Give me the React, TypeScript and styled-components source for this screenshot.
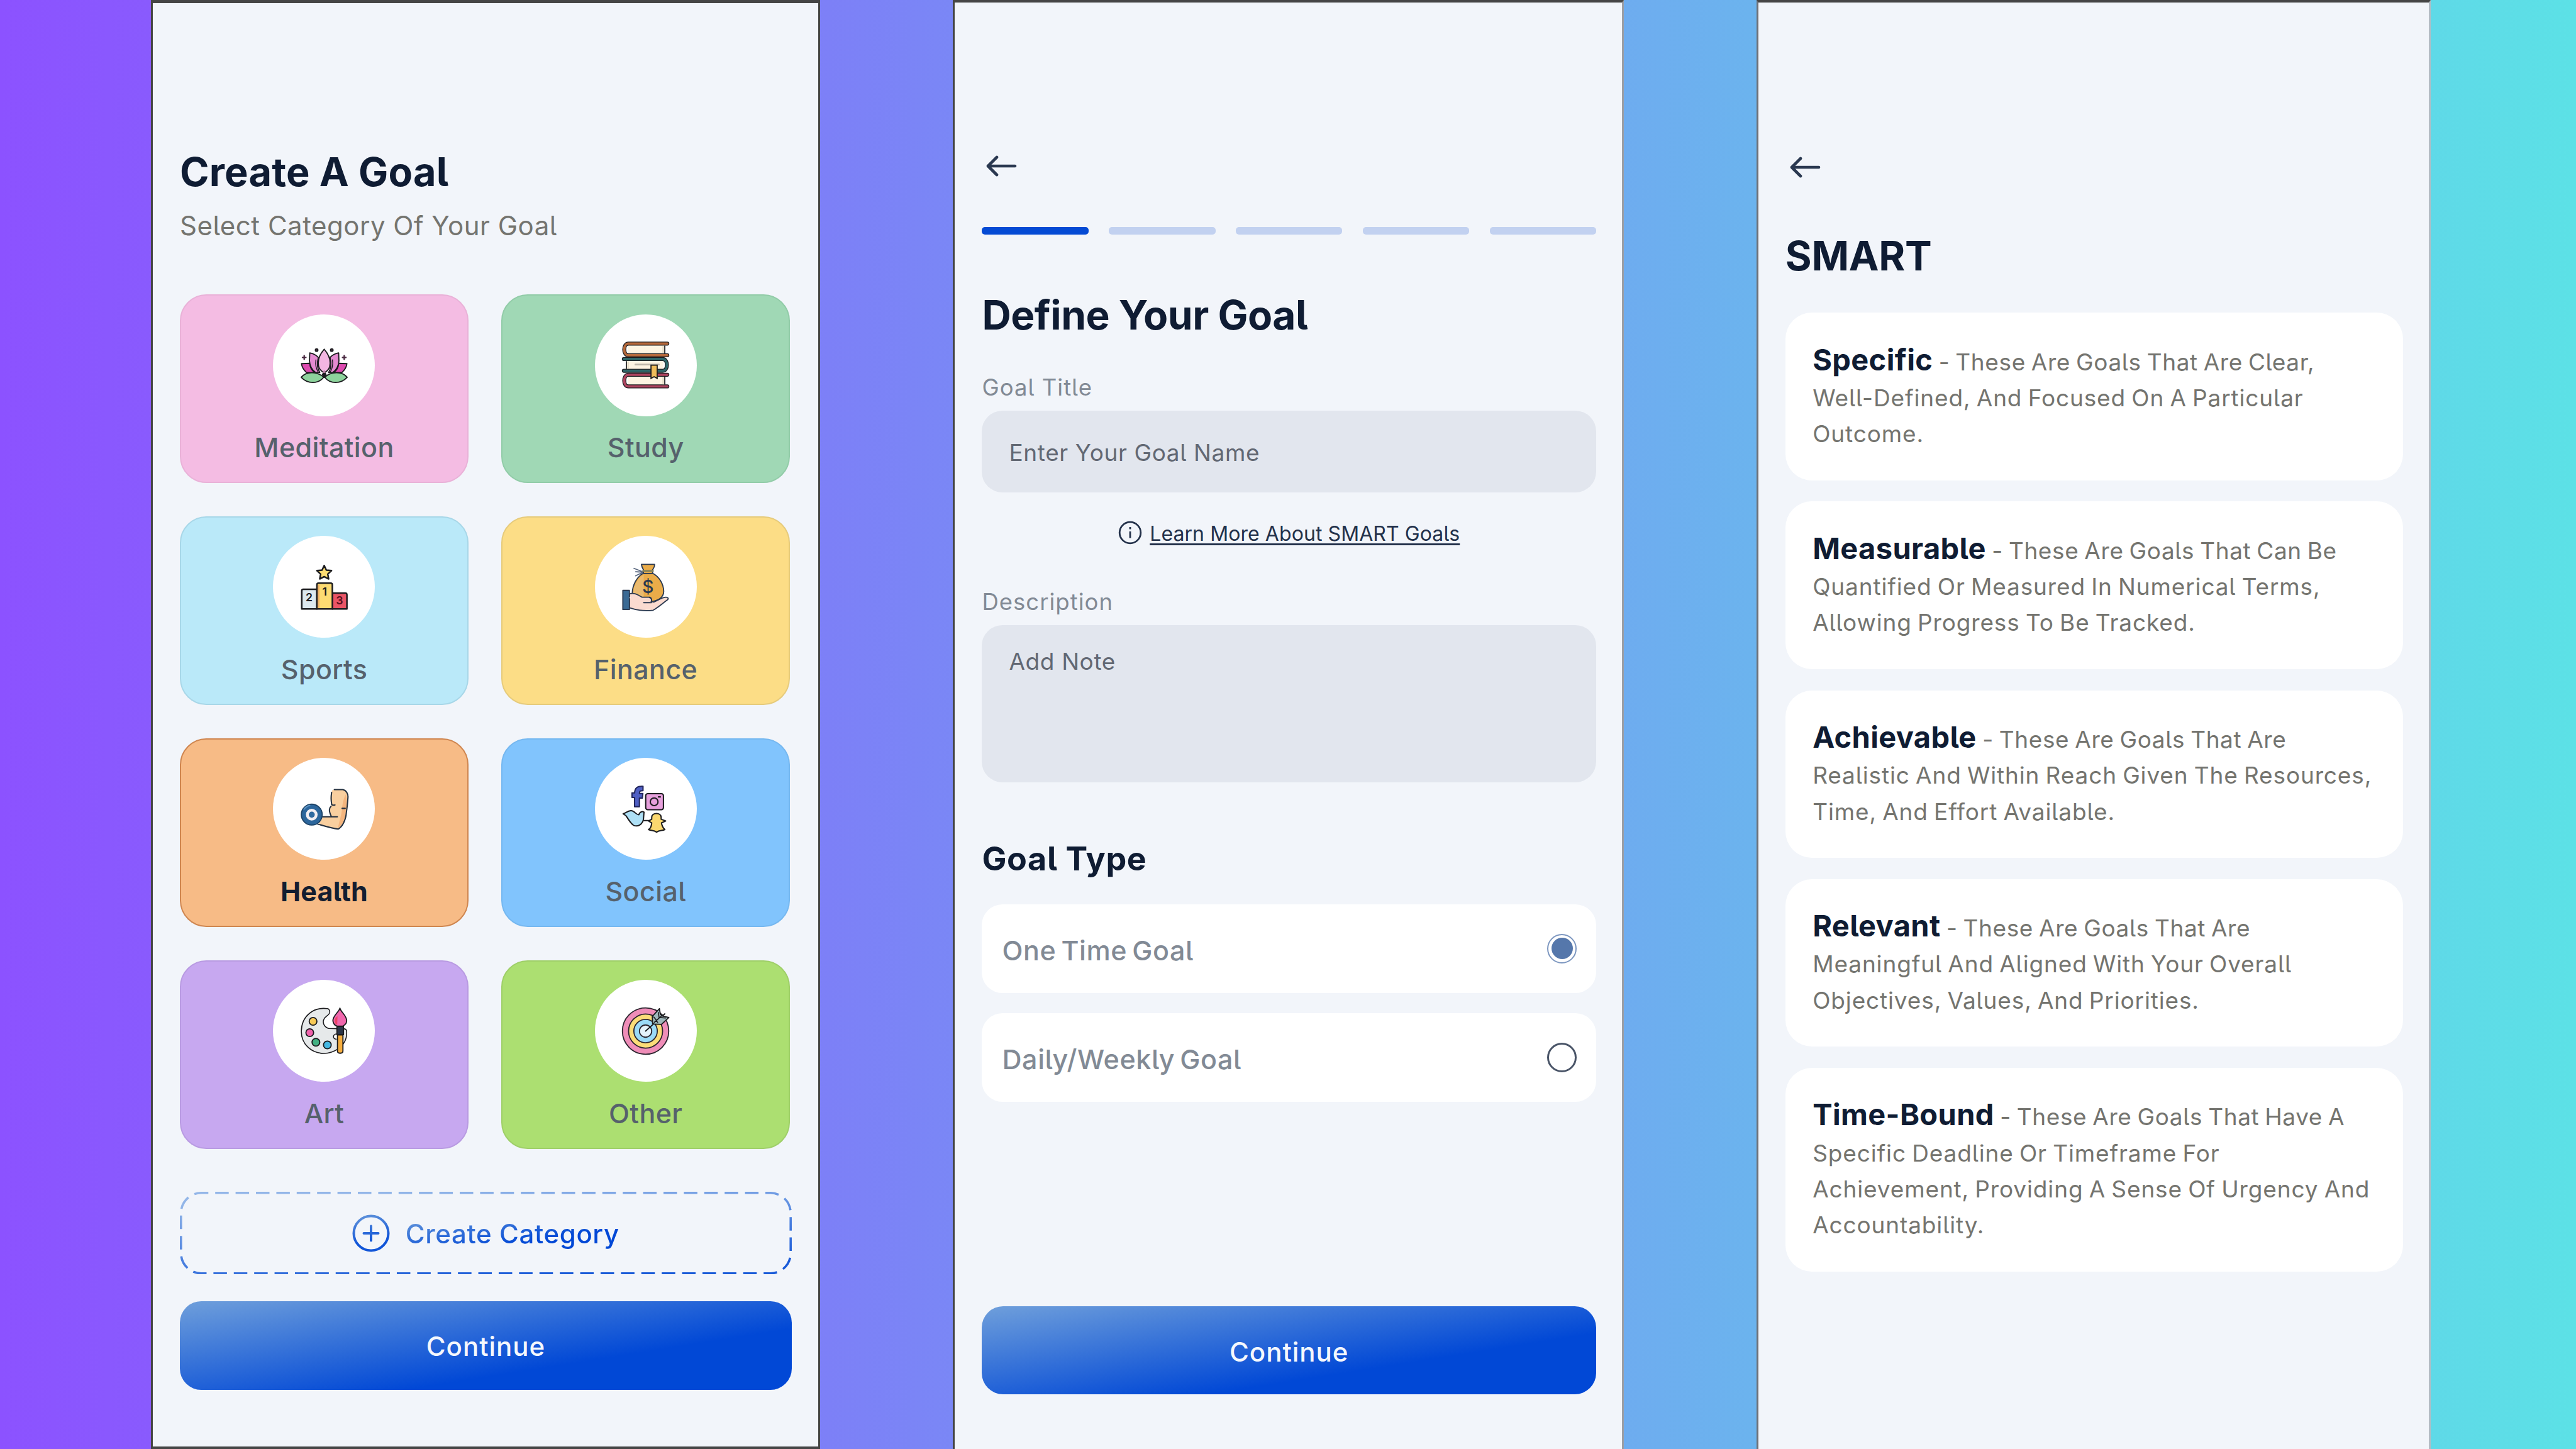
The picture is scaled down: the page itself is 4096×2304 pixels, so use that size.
import React from "react";
import styled, { createGlobalStyle, css } from "styled-components";

const GlobalStyle = createGlobalStyle`
  * { box-sizing: border-box; }
  html, body { margin: 0; padding: 0; }
  body {
    width: 4096px;
    height: 2304px;
    overflow: hidden;
    font-family: Inter, "Liberation Sans", sans-serif;
    font-feature-settings: "cv05";
    color: #0f1c33;
  }
  h1, h2, p { margin: 0; }
  button { font: inherit; font-feature-settings: inherit; }
`;

const primaryGradient = "linear-gradient(171deg, #6f9fdb 0%, #0148d6 67%)";

const Stage = styled.main`
  display: flex;
  width: 4096px;
  height: 2304px;
  padding-left: 240.3px;
  gap: 210.8px;
  background: linear-gradient(90deg, #8c52ff 0%, #5ce1e6 100%);
`;

const Phone = styled.section<{ $width: number; $closed?: boolean; $soft?: boolean }>`
  display: flex;
  flex-direction: column;
  flex: none;
  width: ${(p) => p.$width}px;
  height: 2304px;
  background: #f2f5fa;
  border-style: solid;
  border-color: #454545 ${(p) => (p.$closed ? "#454545" : p.$soft ? "#b4bcc4" : "#9a9ea6")} #454545
    ${(p) => (p.$soft ? "#6d7178" : "#454545")};
  border-width: ${(p) => (p.$closed ? "5px 3px 4px 3px" : "4px 3px 0 3px")};
`;

const CategoryScreen = styled(Phone)`
  padding: 230px 45px 0 42.7px;
`;
const DefineScreen = styled(Phone)`
  padding: 236px 41px 0 43.8px;
`;
const SmartScreen = styled(Phone)`
  padding: 238px 41px 0 43px;
`;

const Title = styled.h1<{ $gap?: number; $size?: number; $track?: number }>`
  margin-top: ${(p) => p.$gap ?? 0}px;
  font-size: ${(p) => p.$size ?? 64}px;
  font-weight: 680;
  line-height: 76px;
  letter-spacing: ${(p) => p.$track ?? 0}px;
  white-space: nowrap;
`;

const Subtitle = styled.p`
  margin-top: 23.4px;
  font-size: 42px;
  line-height: 50px;
  letter-spacing: 0.5px;
  color: #74746f;
`;

const CategoryGrid = styled.div`
  display: grid;
  grid-template-columns: 459px 459px;
  grid-auto-rows: 300px;
  gap: 52.9px 52.2px;
  margin-top: 83.7px;
`;

const CategoryCard = styled.button<{ $fill: string; $edge: string; $active?: boolean }>`
  display: flex;
  flex-direction: column;
  align-items: center;
  padding: 29.5px 0 0;
  border: 2px solid ${(p) => p.$edge};
  border-radius: 42px;
  background: ${(p) => p.$fill};
  font-size: 43px;
  line-height: 50px;
  ${(p) =>
    p.$active
      ? css`font-weight: 660; color: #131d30; letter-spacing: 0.2px;`
      : css`font-weight: 500; color: #56616c; letter-spacing: 0.4px;`}
`;

const IconDisc = styled.span`
  display: grid;
  place-items: center;
  width: 162px;
  height: 162px;
  margin-bottom: 24.5px;
  border-radius: 50%;
  background: #fff;
`;

const Glyph = styled.svg`
  width: 75px;
  height: 75px;
  overflow: visible;
`;

const CreateCategory = styled.button`
  position: relative;
  display: flex;
  align-items: center;
  justify-content: center;
  gap: 24.5px;
  width: 973px;
  height: 131.5px;
  margin-top: 68.2px;
  padding: 0;
  border: 0;
  background: none;
`;

const DashedOutline = styled.svg`
  position: absolute;
  inset: 0;
  width: 100%;
  height: 100%;
`;

const GradientLabel = styled.span`
  padding-top: 3px;
  font-size: 42px;
  font-weight: 530;
  line-height: 54px;
  letter-spacing: 0.62px;
  color: transparent;
  background: linear-gradient(171deg, #6f9fdb 0%, #0148d6 67%);
  background-clip: text;
`;

const PlusIcon = styled.svg`
  width: 60px;
  height: 60px;
`;

const PrimaryButton = styled.button<{ $gap: number; $drop: number }>`
  flex: none;
  width: ${(p) => (p.$gap > 100 ? "100%" : "973px")};
  height: 140.6px;
  margin-top: ${(p) => p.$gap}px;
  padding: ${(p) => p.$drop}px 0 0;
  border: 0;
  border-radius: 34px;
  background: ${primaryGradient};
  color: #f5f8fd;
  font-size: 42px;
  font-weight: 500;
  letter-spacing: 1px;
`;

const BackArrow = styled.svg`
  flex: none;
  width: 49px;
  height: 48px;
  margin-left: 7px;
`;

const Steps = styled.div`
  display: grid;
  grid-template-columns: repeat(5, 1fr);
  gap: 32.4px;
  margin-top: 73.4px;
`;

const Step = styled.span<{ $on?: boolean }>`
  height: 11.3px;
  border-radius: 5px;
  background: ${(p) => (p.$on ? "#044ad4" : "#c2d1f0")};
`;

const FieldLabel = styled.label<{ $gap: number }>`
  margin-top: ${(p) => p.$gap}px;
  font-size: 36.5px;
  line-height: 44px;
  letter-spacing: 1px;
  color: #828a95;
`;

const Field = styled.div<{ $height: number; $pad: number }>`
  height: ${(p) => p.$height}px;
  margin-top: 14.6px;
  padding: ${(p) => p.$pad}px 43px 0;
  border-radius: 33px;
  background: #e2e6ee;
  font-size: 37px;
  line-height: 44px;
  letter-spacing: 0.6px;
  color: #626873;
`;

const LearnMore = styled.a`
  display: flex;
  align-items: center;
  justify-content: center;
  gap: 12px;
  height: 44px;
  margin-top: 43.8px;
  font-size: 32px;
  line-height: 44px;
  color: #23314a;
`;

const LearnText = styled.span`
  letter-spacing: 0.08px;
  text-decoration: underline;
  text-decoration-thickness: 3px;
  text-underline-offset: 4px;
  text-decoration-skip-ink: none;
`;

const InfoIcon = styled.svg`
  width: 38px;
  height: 38px;
  margin-top: -4px;
`;

const SectionTitle = styled.h2`
  margin-top: 90.5px;
  font-size: 52px;
  font-weight: 660;
  line-height: 64px;
  letter-spacing: 0.6px;
`;

const Options = styled.div`
  display: grid;
  gap: 32.2px;
  margin-top: 39.6px;
`;

const Option = styled.div`
  display: flex;
  align-items: center;
  justify-content: space-between;
  height: 141px;
  padding: 0 30.5px 0 32px;
  border-radius: 33px;
  background: #fff;
  font-size: 43px;
  font-weight: 500;
  letter-spacing: 0.6px;
  word-spacing: -4px;
  color: #828a95;
`;

const OptionText = styled.span`
  padding-top: 5px;
`;

const Radio = styled.span<{ $on?: boolean }>`
  display: grid;
  place-items: center;
  width: 47px;
  height: 47px;
  border: ${(p) => (p.$on ? "2.5px solid #7d97c0" : "3px solid #4a5568")};
  border-radius: 50%;
  &::after {
    content: "";
    width: 34px;
    height: 34px;
    border-radius: 50%;
    background: ${(p) => (p.$on ? "#5577ab" : "transparent")};
  }
`;

const SmartList = styled.div`
  display: grid;
  gap: 33.6px;
  margin-top: 52.4px;
`;

const SmartCard = styled.p`
  padding: 49.6px 34px 45.4px 43.4px;
  border-radius: 42px;
  background: #fff;
  font-size: 37px;
  line-height: 57.2px;
  letter-spacing: 0.86px;
  word-spacing: -2px;
  color: #74746f;
`;

const Line = styled.span`
  display: flex;
  align-items: baseline;
  height: 57.2px;
  white-space: nowrap;
`;

const Term = styled.strong`
  margin-right: 9.5px;
  font-size: 47px;
  font-weight: 660;
  line-height: 47px;
  letter-spacing: 0.35px;
  color: #0f1c33;
`;

const Lead = styled.span`
  letter-spacing: 0.6px;
`;

const ink = "#1c1c1f";
const outline = { stroke: ink, strokeWidth: 8, strokeLinejoin: "round" as const, strokeLinecap: "round" as const };

const LotusHalf = () => (
  <g {...outline}>
    <path d="M6 155 L64 153 C66 185 80 205 100 218 L40 216 C22 200 9 180 6 155Z" fill="#dd4bb0" />
    <path d="M64 80 L62 135 C64 172 82 200 105 217 L134 217 C118 190 114 150 124 112 C108 94 86 84 64 80Z" fill="#e48ad0" />
    <path d="M107 128 C102 165 108 190 122 212" fill="none" strokeWidth={6} />
    <path d="M4 250 C40 208 115 208 162 250 C125 298 50 300 4 250Z" fill="#8dd39c" />
    <path d="M25 99 V125 M13 112 H37" strokeWidth={10} stroke="#4a2a42" />
    <circle cx="112" cy="60" r="9" fill="#4a2a42" />
  </g>
);

const Lotus = () => (
  <Glyph viewBox="0 0 330 330">
    <LotusHalf />
    <g transform="translate(330 0) scale(-1 1)"><LotusHalf /></g>
    <path {...outline} d="M165 54 C190 82 208 120 206 155 C206 188 190 207 165 218 C140 207 124 188 124 155 C122 120 140 82 165 54Z" fill="#f3b6e2" />
    <path d="M165 202 L182 232 L165 256 L148 232Z" fill={ink} />
    <circle cx="165" cy="212" r="9" fill="#b57ba2" />
  </Glyph>
);

const Book = ({ y, color, flip }: { y: number; color: string; flip?: boolean }) => (
  <g transform={`translate(${flip ? 335 : 0} ${y}) ${flip ? "scale(-1 1)" : ""}`} fill="none" strokeLinecap="round">
    <path d="M42 16 H302 V98 H42Z" fill="#fdf4e2" />
    <path d="M322 15 H46 C6 15 6 98 46 98 H322" stroke={ink} strokeWidth={28} />
    <path d="M322 15 H46 C6 15 6 98 46 98 H322" stroke={color} strokeWidth={17} />
    <path d="M304 32 V82" stroke={ink} strokeWidth={8} />
    <path d="M292 34 V80" stroke="#d8cfba" strokeWidth={8} />
  </g>
);

const Books = () => (
  <Glyph viewBox="0 0 335 335">
    <Book y={0} color="#b5683a" />
    <Book y={221} color="#b04560" />
    <Book y={110} color="#2d6668" flip />
    <path d="M95 164 H262" stroke="#bcb6aa" strokeWidth={12} strokeLinecap="round" />
    <path d="M206 168 H250 V262 L228 250 L206 262Z" fill="#f0bd5a" stroke={ink} strokeWidth={8} />
  </Glyph>
);

const Digit = styled.text`
  font-size: 78px;
  font-weight: 600;
  letter-spacing: 0;
  text-anchor: middle;
`;

const Podium = () => (
  <Glyph viewBox="0 0 330 330">
    <g {...outline} strokeWidth={11}>
      <path d="M8 318 V190 Q8 180 18 180 H114 V318Z" fill="#dde9ef" />
      <path d="M222 318 V207 H312 Q324 207 324 219 V318Z" fill="#ea5566" />
      <path d="M114 318 V148 Q114 137 125 137 H211 Q222 137 222 148 V318Z" fill="#fddc72" />
      <path d="M165 14 L180 46 L216 50 L190 74 L196 108 L165 92 L134 108 L140 74 L114 50 L150 46Z" fill="#fddc72" />
    </g>
    <path d="M126 150 V310" stroke="#f0b267" strokeWidth={12} />
    <Digit x="60" y="264" fill={ink}>2</Digit>
    <Digit x="168" y="226" fill={ink}>1</Digit>
    <Digit x="272" y="284" fill="#5a1020">3</Digit>
  </Glyph>
);

const MoneyBag = () => (
  <Glyph viewBox="0 0 330 330">
    <g stroke="#2c3a50" strokeWidth={8} strokeLinejoin="round" strokeLinecap="round">
      <path d="M150 60 L84 34 M146 62 L96 86 M96 58 L140 60" fill="none" stroke="#5a6880" />
      <path d="M150 68 C105 90 74 150 72 205 C76 250 130 268 180 268 C255 268 292 235 292 195 C290 140 258 90 214 68Z" fill="#eaac49" />
      <path d="M136 6 H228 C230 24 220 34 214 44 V70 H150 V44 C144 34 138 24 136 6Z" fill="#eaac49" />
      <path d="M148 52 H216" stroke="#8a8458" strokeWidth={14} />
    </g>
    <path d="M78 205 C82 150 112 104 152 78 V256 C110 250 82 236 78 205Z" fill="#eabb70" />
    <text x="182" y="206" fontSize="124" fontWeight="500" textAnchor="middle" fill="#2c3a50" letterSpacing="0">$</text>
    <g stroke="#2c3a50" strokeWidth={8} strokeLinejoin="round" strokeLinecap="round">
      <path d="M52 213 C85 202 112 220 140 236 H192 C208 238 210 258 204 266 L222 270 C255 255 280 238 304 236 C322 234 328 246 318 254 C285 278 255 305 218 327 C170 332 110 330 52 310Z" fill="#fadbd0" />
      <path d="M152 274 H206 C212 256 204 240 192 238" fill="none" />
      <path d="M6 188 H52 V322 H6Z" fill="#3b6a94" />
    </g>
    <path d="M52 240 H60" stroke="#fff" strokeWidth={6} />
  </Glyph>
);

const Arm = () => (
  <Glyph viewBox="0 0 330 330">
    <path d="M217 44 C220 32 226 30 236 29 H300 C322 36 332 60 330 85 C328 120 326 150 320 190 C318 240 296 285 262 305 C220 302 170 285 127 270 L154 219 H216 C200 190 196 160 217 134 C206 110 208 70 217 44Z" fill="#f9cf9f" />
    <path d="M318 60 C328 120 316 190 312 215 C300 260 282 285 262 296 C270 250 285 215 290 160 C294 120 300 90 318 60Z" fill="#f4b57e" />
    <g fill="none" stroke="#24303f" strokeWidth={9} strokeLinecap="round" strokeLinejoin="round">
      <path d="M236 29 H296 C320 34 334 60 331 85 C329 120 326 150 320 190 C316 245 290 290 262 305 C220 300 170 285 120 270" />
      <path d="M217 48 C212 80 212 100 217 128 M217 134 C226 140 234 138 240 136 M212 146 C196 160 202 190 215 216 M154 219 H257 M290 160 H312" />
    </g>
    <circle cx="78" cy="204" r="73" fill="#2c669c" stroke="#1e4468" strokeWidth={8} />
    <circle cx="78" cy="204" r="31" fill="none" stroke="#f2eef2" strokeWidth={20} />
    <circle cx="78" cy="204" r="16" fill="#2f6aa0" />
    <path d="M24 166 A66 66 0 0 1 64 140" fill="none" stroke="#5c94c4" strokeWidth={9} strokeLinecap="round" />
  </Glyph>
);

const SocialMarks = () => (
  <Glyph viewBox="0 0 330 330">
    <g {...outline} strokeWidth={9}>
      <path d="M147 6 C105 2 90 20 88 52 H70 V84 H88 V148 H122 V88 H142 L146 56 H122 C122 38 128 36 147 36Z" fill="#4f5fc4" stroke="#22265c" />
      <rect x="166" y="57" width="124" height="112" rx="14" fill="#e6a0dc" />
      <circle cx="225" cy="114" r="27" fill="none" />
      <path d="M255 80 H268" strokeWidth={10} />
      <path d="M8 198 C28 192 40 178 62 176 C88 174 96 206 118 204 C124 186 140 178 154 186 L150 236 C144 272 112 290 84 280 C62 270 44 232 26 210Z" fill="#aee0f6" />
      <path d="M152 245 H190" />
      <path d="M208 224 C206 186 276 186 274 224 V236 L306 248 L276 262 C280 284 290 300 300 308 C282 318 262 312 242 326 C222 312 204 318 186 308 C200 300 206 284 208 262 L186 248 L208 236Z" fill="#fbd86f" />
    </g>
  </Glyph>
);

const Palette = () => (
  <Glyph viewBox="0 0 330 330">
    <path {...outline} strokeWidth={7} d="M188 8 C90 -6 6 60 5 165 C4 260 80 322 165 321 C210 321 240 304 262 290 C300 262 326 220 322 166 C320 152 312 148 300 149 L195 146 C165 136 152 108 162 84 C172 58 206 54 204 30 C202 16 200 10 188 8Z" fill="#e6e9ea" />
    <path d="M262 186 C226 178 216 220 252 222" fill="#fff" stroke={ink} strokeWidth={7} />
    <g stroke={ink} strokeWidth={8}>
      <circle cx="87" cy="97" r="27" fill="#f7ca58" />
      <circle cx="64" cy="176" r="27" fill="#ef62ab" />
      <circle cx="107" cy="243" r="27" fill="#43b183" />
      <circle cx="187" cy="262" r="27" fill="#45b8e2" />
    </g>
    <g {...outline}>
      <path d="M275 4 C268 34 224 56 226 94 C230 118 246 128 256 130 H296 C312 122 324 112 322 90 C320 54 284 36 275 4Z" fill="#f067ad" />
      <path d="M254 132 H300 V190 H254Z" fill="#2b3547" />
      <path d="M258 192 H296 V305 C296 325 258 325 258 305Z" fill="#f5ad3e" />
    </g>
    <path d="M258 60 C234 76 228 108 256 122Z" fill="#ec4668" />
  </Glyph>
);

const Target = () => (
  <Glyph viewBox="0 0 330 330">
    <g stroke="#2d2630" strokeWidth={8}>
      <circle cx="165" cy="165" r="162" fill="#ef8db8" />
      <circle cx="165" cy="165" r="119" fill="#fbdc78" />
      <circle cx="165" cy="165" r="82" fill="#9bdaf7" />
      <circle cx="165" cy="165" r="43" fill="#e4f2fb" />
    </g>
    <g {...outline}>
      <path d="M165 165 L300 44" />
      <path d="M214 112 L212 62 L262 8 L268 46 L284 60 L328 70 L276 118 L226 116Z" fill="#9fb9bc" />
      <path d="M226 104 L284 52 M222 66 L240 88 M254 34 L260 72 M250 104 L240 92 M304 74 L266 70" strokeWidth={7} />
    </g>
  </Glyph>
);

const categories = [
  { name: "Meditation", fill: "#f4bce3", edge: "#e9b2d8", icon: <Lotus /> },
  { name: "Study", fill: "#a0d8b5", edge: "#92cca8", icon: <Books /> },
  { name: "Sports", fill: "#bae9f9", edge: "#a8d7e8", icon: <Podium /> },
  { name: "Finance", fill: "#fcdd86", edge: "#e6cb7c", icon: <MoneyBag /> },
  { name: "Health", fill: "#f7bb86", edge: "#cf8650", icon: <Arm />, active: true },
  { name: "Social", fill: "#81c4fd", edge: "#76b8f0", icon: <SocialMarks /> },
  { name: "Art", fill: "#c7a8f0", edge: "#b99be2", icon: <Palette /> },
  { name: "Other", fill: "#acdf71", edge: "#9fcf69", icon: <Target /> },
];

const principles = [
  {
    term: "Specific",
    lead: "- These Are Goals That Are Clear,",
    rest: ["Well-Defined, And Focused On A Particular", "Outcome."],
  },
  {
    term: "Measurable",
    lead: "- These Are Goals That Can Be",
    rest: ["Quantified Or Measured In Numerical Terms,", "Allowing Progress To Be Tracked."],
  },
  {
    term: "Achievable",
    lead: "- These Are Goals That Are",
    rest: ["Realistic And Within Reach Given The Resources,", "Time, And Effort Available."],
  },
  {
    term: "Relevant",
    lead: "- These Are Goals That Are",
    rest: ["Meaningful And Aligned With Your Overall", "Objectives, Values, And Priorities."],
  },
  {
    term: "Time-Bound",
    lead: "- These Are Goals That Have A",
    rest: ["Specific Deadline Or Timeframe For", "Achievement, Providing A Sense Of Urgency And", "Accountability."],
  },
];

const Back = () => (
  <BackArrow viewBox="0 0 49 48" fill="none" stroke="#2a3850" strokeLinecap="round" strokeLinejoin="round">
    <path d="M4 24 H46" strokeWidth={4.6} />
    <path d="M17 10 L3 24 L17 38" strokeWidth={4.6} />
  </BackArrow>
);

export default function App() {
  return (
    <>
      <GlobalStyle />
      <Stage>
        <CategoryScreen $width={1063.6} $closed>
          <Title $size={63} $track={0.2}>Create A Goal</Title>
          <Subtitle>Select Category Of Your Goal</Subtitle>
          <CategoryGrid>
            {categories.map((c) => (
              <CategoryCard key={c.name} $fill={c.fill} $edge={c.edge} $active={c.active}>
                <IconDisc>{c.icon}</IconDisc>
                {c.name}
              </CategoryCard>
            ))}
          </CategoryGrid>
          <CreateCategory>
            <DashedOutline viewBox="0 0 973 131.5">
              <defs>
                <linearGradient id="dash" gradientUnits="userSpaceOnUse" x1="480" y1="-10" x2="490" y2="140">
                  <stop offset="0" stopColor="#93b6e8" />
                  <stop offset="1" stopColor="#1a5bd8" />
                </linearGradient>
              </defs>
              <rect x="1.8" y="1.8" width="969.4" height="127.9" rx="32" fill="none" stroke="url(#dash)" strokeWidth="3.6" strokeDasharray="21.5 10.9" strokeDashoffset="10" />
            </DashedOutline>
            <PlusIcon viewBox="0 0 60 60" fill="none" stroke="url(#plus)" strokeWidth="4" strokeLinecap="round">
              <defs>
                <linearGradient id="plus" gradientUnits="userSpaceOnUse" x1="20" y1="0" x2="34" y2="60">
                  <stop offset="0" stopColor="#5f92da" />
                  <stop offset="0.7" stopColor="#1256d8" />
                </linearGradient>
              </defs>
              <circle cx="30" cy="30" r="27.5" />
              <path d="M30 18.5 V41.5 M18.5 30 H41.5" />
            </PlusIcon>
            <GradientLabel>Create Category</GradientLabel>
          </CreateCategory>
          <PrimaryButton $gap={42.5} $drop={3}>Continue</PrimaryButton>
        </CategoryScreen>

        <DefineScreen $width={1067.3}>
          <Back />
          <Steps>
            <Step $on />
            <Step />
            <Step />
            <Step />
            <Step />
          </Steps>
          <Title $gap={90.8} $track={-0.5}>Define Your Goal</Title>
          <FieldLabel $gap={54.8}>Goal Title</FieldLabel>
          <Field $height={130.2} $pad={45.6}>Enter Your Goal Name</Field>
          <LearnMore>
            <InfoIcon viewBox="0 0 38 38" fill="none" stroke="#23314a" strokeWidth="2.8">
              <circle cx="19" cy="19" r="16.8" />
              <path d="M19 17 V27.5 M19 10 V13.4" />
            </InfoIcon>
            <LearnText>Learn More About SMART Goals</LearnText>
          </LearnMore>
          <FieldLabel $gap={64.5}>Description</FieldLabel>
          <Field $height={249.6} $pad={36.4}>Add Note</Field>
          <SectionTitle>Goal Type</SectionTitle>
          <Options>
            <Option><OptionText>One Time Goal</OptionText><Radio $on /></Option>
            <Option><OptionText>Daily/Weekly Goal</OptionText><Radio /></Option>
          </Options>
          <PrimaryButton $gap={324.7} $drop={5}>Continue</PrimaryButton>
        </DefineScreen>

        <SmartScreen $width={1072.3} $soft>
          <Back />
          <Title $gap={78.9} $track={-0.3}>SMART</Title>
          <SmartList>
            {principles.map((p) => (
              <SmartCard key={p.term}>
                <Line><Term>{p.term}</Term><Lead>{p.lead}</Lead></Line>
                {p.rest.map((line) => <Line key={line}>{line}</Line>)}
              </SmartCard>
            ))}
          </SmartList>
        </SmartScreen>
      </Stage>
    </>
  );
}
